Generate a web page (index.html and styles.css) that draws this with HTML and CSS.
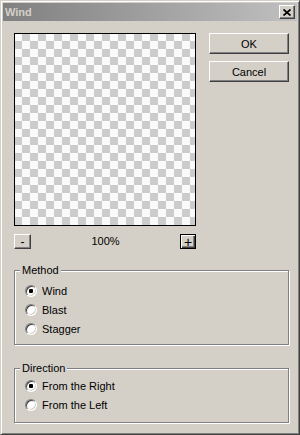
FILE: index.html
```html
<!DOCTYPE html>
<html>
<head>
<meta charset="utf-8">
<link rel="stylesheet" href="styles.css">
</head>
<body>
<div class="window">
  <div class="titlebar">
    <span class="title">Wind</span>
    <button class="close" aria-label="Close">
      <svg width="8" height="7" viewBox="0 0 8 7"><path d="M0.5 0.5L7.5 6.5M7.5 0.5L0.5 6.5" stroke="#000" stroke-width="1.7" fill="none"/></svg>
    </button>
  </div>
  <div class="body">
    <div class="top">
      <div class="preview-col">
        <div class="preview"></div>
        <div class="zoom-row">
          <button class="zbtn">-</button>
          <span class="zoom-val">100%</span>
          <button class="zbtn zbtn-default">+</button>
        </div>
      </div>
      <div class="actions">
        <button class="btn">OK</button>
        <button class="btn">Cancel</button>
      </div>
    </div>
    <fieldset class="group method">
      <legend>Method</legend>
      <div class="opt"><span class="radio checked"></span><span>Wind</span></div>
      <div class="opt"><span class="radio"></span><span>Blast</span></div>
      <div class="opt"><span class="radio"></span><span>Stagger</span></div>
    </fieldset>
    <fieldset class="group direction">
      <legend>Direction</legend>
      <div class="opt"><span class="radio checked"></span><span>From the Right</span></div>
      <div class="opt"><span class="radio"></span><span>From the Left</span></div>
    </fieldset>
  </div>
</div>
</body>
</html>
```
FILE: styles.css
```css
html, body {
  margin: 0;
  padding: 0;
  background: #d4d0c8;
}
body {
  font-family: "Liberation Sans", Arial, sans-serif;
  font-size: 11px;
  color: #000;
}
.window {
  width: 300px;
  height: 435px;
  box-sizing: border-box;
  background: #d4d0c8;
  border: 1px solid;
  border-color: #d4d0c8 #404040 #404040 #d4d0c8;
  box-shadow: inset 1px 1px 0 #fff, inset -1px -1px 0 #808080;
  padding: 2px;
}
.titlebar {
  height: 18px;
  display: flex;
  align-items: center;
  justify-content: space-between;
  padding: 0 2px 0 2px;
  background: linear-gradient(to right, #808080, #c0c0c0);
}
.title {
  font-weight: bold;
  color: #d4d0c8;
  font-size: 11px;
  line-height: 18px;
}
.close, .btn, .zbtn {
  font-family: "Liberation Sans", Arial, sans-serif;
  font-size: 11px;
  color: #000;
  background: #d4d0c8;
  box-sizing: border-box;
  border: 1px solid;
  border-color: #fff #404040 #404040 #fff;
  box-shadow: inset -1px -1px 0 #808080, inset 1px 1px 0 #d4d0c8;
  padding: 0;
  margin: 0;
  display: flex;
  align-items: center;
  justify-content: center;
}
.close {
  width: 16px;
  height: 14px;
}
.close svg {
  display: block;
  margin-left: -1px;
}
.body {
  padding: 12px 0 0 11px;
}
.top {
  display: flex;
  gap: 13px;
}
.preview-col {
  width: 182px;
}
.preview {
  height: 193px;
  box-sizing: border-box;
  border: 1px solid #000;
  background-color: #fafafa;
  background-image: conic-gradient(#cccccc 25%, #fafafa 0 50%, #cccccc 0 75%, #fafafa 0);
  background-size: 16px 16px;
  background-position: -1px -1px;
}
.zoom-row {
  margin-top: 8px;
  height: 15px;
  display: flex;
  align-items: center;
  justify-content: space-between;
}
.zbtn {
  width: 17px;
  height: 15px;
  font-size: 12px;
  line-height: 1;
}
.zbtn-default {
  width: 16px;
  border: 1px solid #000;
  box-shadow: inset 1px 1px 0 #fff, inset -1px -1px 0 #404040, inset -2px -2px 0 #808080;
  font-size: 14px;
}
.zoom-val {
  line-height: 15px;
}
.actions {
  display: flex;
  flex-direction: column;
  gap: 7px;
}
.btn {
  width: 80px;
  height: 21px;
}
.group {
  width: 275px;
  box-sizing: border-box;
  margin: 0;
  border: 1px solid #808080;
  box-shadow: 1px 1px 0 #fff, inset 1px 1px 0 #fff;
  padding: 0;
}
.group legend {
  margin-left: 5px;
  padding: 0 2px;
  line-height: 13px;
  background: #d4d0c8;
}
.method {
  margin-top: 15px;
  padding-top: 4px;
  padding-bottom: 6px;
}
.direction {
  margin-top: 17px;
  padding-top: 1px;
  padding-bottom: 8px;
}
.opt {
  height: 19px;
  display: flex;
  align-items: center;
  gap: 5px;
  padding-left: 10px;
}
.radio {
  width: 12px;
  height: 12px;
  box-sizing: border-box;
  border-radius: 50%;
  background: #fff;
  border: 1px solid;
  border-color: #808080 #fff #fff #808080;
  box-shadow: inset 1px 1px 0 #404040, inset -1px -1px 0 #d4d0c8;
  display: flex;
  align-items: center;
  justify-content: center;
  flex: none;
}
.radio.checked::after {
  content: "";
  width: 4px;
  height: 4px;
  border-radius: 1px;
  background: #000;
}
```
